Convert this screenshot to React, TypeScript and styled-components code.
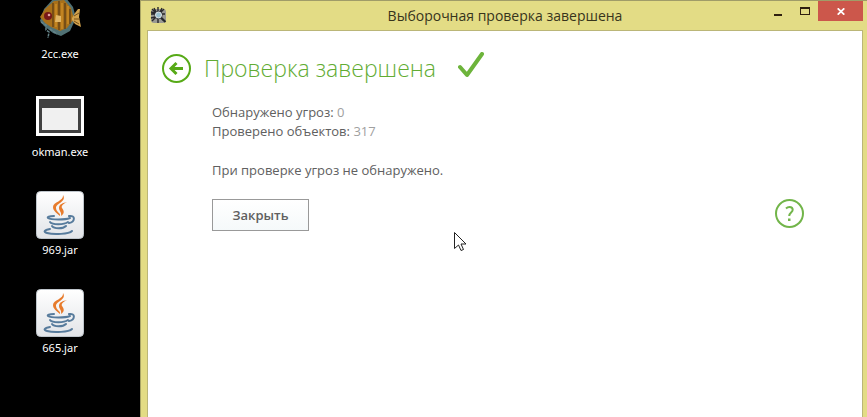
import React from "react";
import styled, { createGlobalStyle } from "styled-components";

const GlobalStyle = createGlobalStyle`
  *, *::before, *::after { box-sizing: border-box; }
  body {
    margin: 0;
    background: #000;
    font-family: "Open Sans", "Noto Sans", sans-serif;
    overflow: hidden;
  }
`;

const Desktop = styled.div`
  display: grid;
  grid-template-columns: 140px minmax(0, 1fr);
  min-height: 100vh;
  background: #000;
`;

const Shortcuts = styled.nav`
  display: flex;
  flex-direction: column;
  gap: 31px;
  width: 120px;
  margin-top: -5px;
`;

const Shortcut = styled.a`
  display: flex;
  flex-direction: column;
  align-items: center;
  gap: 3px;
  color: #fff;
  font-family: "Noto Sans", sans-serif;
  font-size: 11px;
  line-height: 16px;
  text-decoration: none;

  svg { display: block; }
`;

const WindowFrame = styled.main`
  position: relative;
  display: flex;
  flex-direction: column;
  padding: 0 4px 0 6px;
  background: #e3dc85;
  border-left: 1px solid #a9a566;
  border-top: 1px solid #a09c68;
`;

const TitleBar = styled.header`
  display: grid;
  grid-template-columns: 120px 1fr 120px;
  align-items: start;
  height: 29px;
`;

const AppIcon = styled.span`
  padding: 6px 0 0 3px;
  svg { display: block; }
`;

const WindowTitle = styled.h1`
  margin: 0;
  padding-top: 5px;
  color: #37341c;
  font-size: 14px;
  font-weight: 400;
  line-height: 20px;
  text-align: center;
  white-space: nowrap;
`;

const WindowButtons = styled.div`
  display: flex;
  justify-content: flex-end;
`;

const WindowButton = styled.button<{ $danger?: boolean }>`
  display: grid;
  place-items: center;
  width: ${(p) => (p.$danger ? 45 : 27)}px;
  height: 20px;
  padding: 0;
  border: 0;
  background: ${(p) => (p.$danger ? "#cc574b" : "transparent")};
  svg { display: block; }
`;

const Client = styled.section`
  flex: 1;
  padding: 18px 58px 24px 14px;
  background: #fff;
  border: 1px solid #bbb678;
  border-bottom: 0;
`;

const HeadingRow = styled.div`
  display: flex;
  align-items: center;
  height: 38px;
`;

const RoundButton = styled.button`
  display: block;
  width: 29px;
  height: 29px;
  padding: 0;
  border: 0;
  background: none;
  svg { display: block; }
`;

const Heading = styled.h2`
  margin: 0 22px 0 13px;
  color: #62ac33;
  font-size: 23px;
  font-weight: 300;
  line-height: 38px;
  white-space: nowrap;
`;

const CheckMark = styled.svg`
  margin-bottom: 6px;
`;

const Report = styled.div`
  padding: 16px 0 0 50px;
  color: #606060;
  font-size: 13px;
  line-height: 19px;
`;

const Line = styled.p`
  margin: 0;
`;

const Value = styled.span`
  color: #a0a0a0;
`;

const Verdict = styled(Line)`
  margin-top: 20px;
`;

const Actions = styled.div`
  display: flex;
  justify-content: space-between;
  align-items: flex-start;
  margin-top: 19px;
`;

const CloseButton = styled.button`
  width: 97px;
  height: 32px;
  padding: 0;
  border: 1px solid #999;
  background: linear-gradient(#fff, #f5f9fa);
  color: #606060;
  font-family: inherit;
  font-size: 13px;
  font-weight: 600;
`;

const Pointer = styled.svg`
  position: absolute;
  left: 313px;
  top: 231px;
  pointer-events: none;
`;

const FishIcon = () => (
  <svg width="48" height="48" viewBox="0 0 48 48" aria-hidden="true">
    <path d="M8 14 L18 3 L30 3 L37 12 L40 23 L34 36 L25 41 L17 38 L8 31 L4 26Z" fill="#507174" />
    <path d="M9 14 L18 6 L28 5 L35 13 L38 24 L31 33 L24 36 L15 32 L9 28 L4 22Z" fill="#a87019" />
    <path d="M36 23 L39 18 L42 14 H44 L43 22 L45 32 L39 29 L36 25Z" fill="#d2a14b" />
    <path d="M38 21l5-3M38 24h6M38 26l5 3" stroke="#77501b" />
    <path d="M17 8v24M23 6v29M29 8v26M34 14v15" stroke="#674316" strokeWidth="1.500" />
    <path d="M20 9v23M26 8v26M32 11v18" stroke="#cb8b25" strokeWidth="1.500" />
    <path d="M5 27l5 3v5l3 2-1 6M14 34l7 5" stroke="#66858a" strokeWidth="1.500" strokeDasharray="3 1" fill="none" />
    <circle cx="12" cy="21" r="4" fill="#771818" />
    <circle cx="13" cy="20" r="1.300" fill="#e7a1a0" />
    <path d="M20 20l5 1v6h-6Z" fill="#e0b565" />
  </svg>
);

const AppWindowIcon = () => (
  <svg width="48" height="48" viewBox="0 0 48 48" aria-hidden="true">
    <path d="M0 3h48v40H0Z" fill="#fff" />
    <path d="M3 6h42v34H3Z" fill="#414141" />
    <path d="M6 15h36v22H6Z" fill="#f0f0f0" />
  </svg>
);

const JavaIcon = () => (
  <svg width="48" height="48" viewBox="0 0 48 48" aria-hidden="true">
    <defs>
      <linearGradient id="tile" x2="0" y2="1">
        <stop stopColor="#fff" />
        <stop offset="1" stopColor="#e2e4e8" />
      </linearGradient>
    </defs>
    <rect x=".5" y=".5" width="47" height="47" rx="4" fill="url(#tile)" stroke="#bfc6cc" />
    <path d="M27 4c4 7-7 8-7 13 0 4 5 5 4 8-3-3-7-5-7-9C17 11 28 10 27 4Z" fill="#e77b2c" />
    <path d="M31 11c-4 2-6 4-5 6 2 3 3 5-1 8 1-4-2-5-2-8 0-4 4-5 8-6Z" fill="#e77b2c" />
    <g fill="none" stroke="#577b9c" strokeWidth="2" strokeLinecap="round">
      <path d="M18 25c-5 0-7 1-6 2 3 2 17 2 22 0" />
      <path d="M14 31c2 3 14 3 18 0" />
      <path d="M16 35c2 3 11 3 14 0" />
      <path d="M33 25c7-1 6 6 0 7" />
      <path d="M14 38c-6 1-7 3-3 4 7 2 22 1 25-2" />
    </g>
  </svg>
);

const shortcuts = [
  { name: "2cc.exe", Icon: FishIcon },
  { name: "okman.exe", Icon: AppWindowIcon },
  { name: "969.jar", Icon: JavaIcon },
  { name: "665.jar", Icon: JavaIcon },
];

export default function App() {
  return (
    <>
      <GlobalStyle />
      <Desktop>
        <Shortcuts>
          {shortcuts.map(({ name, Icon }) => (
            <Shortcut key={name} href="#">
              <Icon />
              {name}
            </Shortcut>
          ))}
        </Shortcuts>

        <WindowFrame>
          <TitleBar>
            <AppIcon>
              <svg width="17" height="17" viewBox="0 0 17 17" aria-hidden="true">
                <rect x="1" y="2" width="15" height="14" rx="3" fill="#999993" />
                <path d="M8 0v16M1 7h14M2 2l12 12M14 2L2 14M4 1l2 4M12 1l-2 4M1 5l4 1M1 11l4-1" stroke="#29292b" strokeWidth="1.400" />
                <circle cx="8.500" cy="8" r="4" fill="#32383e" />
                <circle cx="8.500" cy="8" r="3" fill="#9bc1cf" stroke="#e3e8e7" />
                <path d="M11.500 11l4 4" stroke="#24272a" strokeWidth="2" />
              </svg>
            </AppIcon>
            <WindowTitle>Выборочная проверка завершена</WindowTitle>
            <WindowButtons>
              <WindowButton aria-label="Свернуть">
                <svg width="8" height="10" viewBox="0 0 8 10"><path d="M0 8h8v2H0Z" fill="#30200f" /></svg>
              </WindowButton>
              <WindowButton aria-label="Развернуть">
                <svg width="10" height="8" viewBox="0 0 10 8"><path d="M0 0h10v8H0ZM1 2v5h8V2Z" fill="#30200f" fillRule="evenodd" /></svg>
              </WindowButton>
              <WindowButton $danger aria-label="Закрыть окно">
                <svg width="8" height="7" viewBox="0 0 8 7"><path d="M.7.300l6.600 6.400M7.300.300L.7 6.700" stroke="#fff" strokeWidth="1.700" /></svg>
              </WindowButton>
            </WindowButtons>
          </TitleBar>

          <Client>
            <HeadingRow>
              <RoundButton aria-label="Назад">
                <svg width="29" height="29" viewBox="0 0 29 29" fill="none" stroke="#57aa17">
                  <circle cx="14.500" cy="14.500" r="13.500" strokeWidth="2" />
                  <path d="M21 14.500H9M14.500 9L9 14.500l5.500 5.500" strokeWidth="3" />
                </svg>
              </RoundButton>
              <Heading>Проверка завершена</Heading>
              <CheckMark width="27" height="26" viewBox="0 0 27 26" aria-hidden="true">
                <path d="M2 15l7 8L24 2" fill="none" stroke="#6db43b" strokeWidth="4" strokeLinecap="round" strokeLinejoin="round" />
              </CheckMark>
            </HeadingRow>
            <Report>
              <Line>Обнаружено угроз: <Value>0</Value></Line>
              <Line>Проверено объектов: <Value>317</Value></Line>
              <Verdict>При проверке угроз не обнаружено.</Verdict>
              <Actions>
                <CloseButton>Закрыть</CloseButton>
                <RoundButton aria-label="Справка">
                  <svg width="29" height="29" viewBox="0 0 29 29" fill="none" stroke="#72b54a">
                    <circle cx="14.500" cy="14.500" r="13.500" strokeWidth="2" />
                    <path d="M11 9.500c1-1 2-1.500 3.500-1.500 2 0 3.200 1 3.200 2.800 0 2.700-3.500 2.900-3.500 6.200" strokeWidth="2" />
                    <path d="M13 19.500h2.500V22H13Z" fill="#72b54a" stroke="none" />
                  </svg>
                </RoundButton>
              </Actions>
            </Report>
          </Client>

          <Pointer width="12" height="20" viewBox="0 0 12 20" aria-hidden="true">
            <path d="M.5.500v16l4-3.500 2.500 5.500 2.500-1-2.500-5.500h5Z" fill="#fff" stroke="#222" />
          </Pointer>
        </WindowFrame>
      </Desktop>
    </>
  );
}
